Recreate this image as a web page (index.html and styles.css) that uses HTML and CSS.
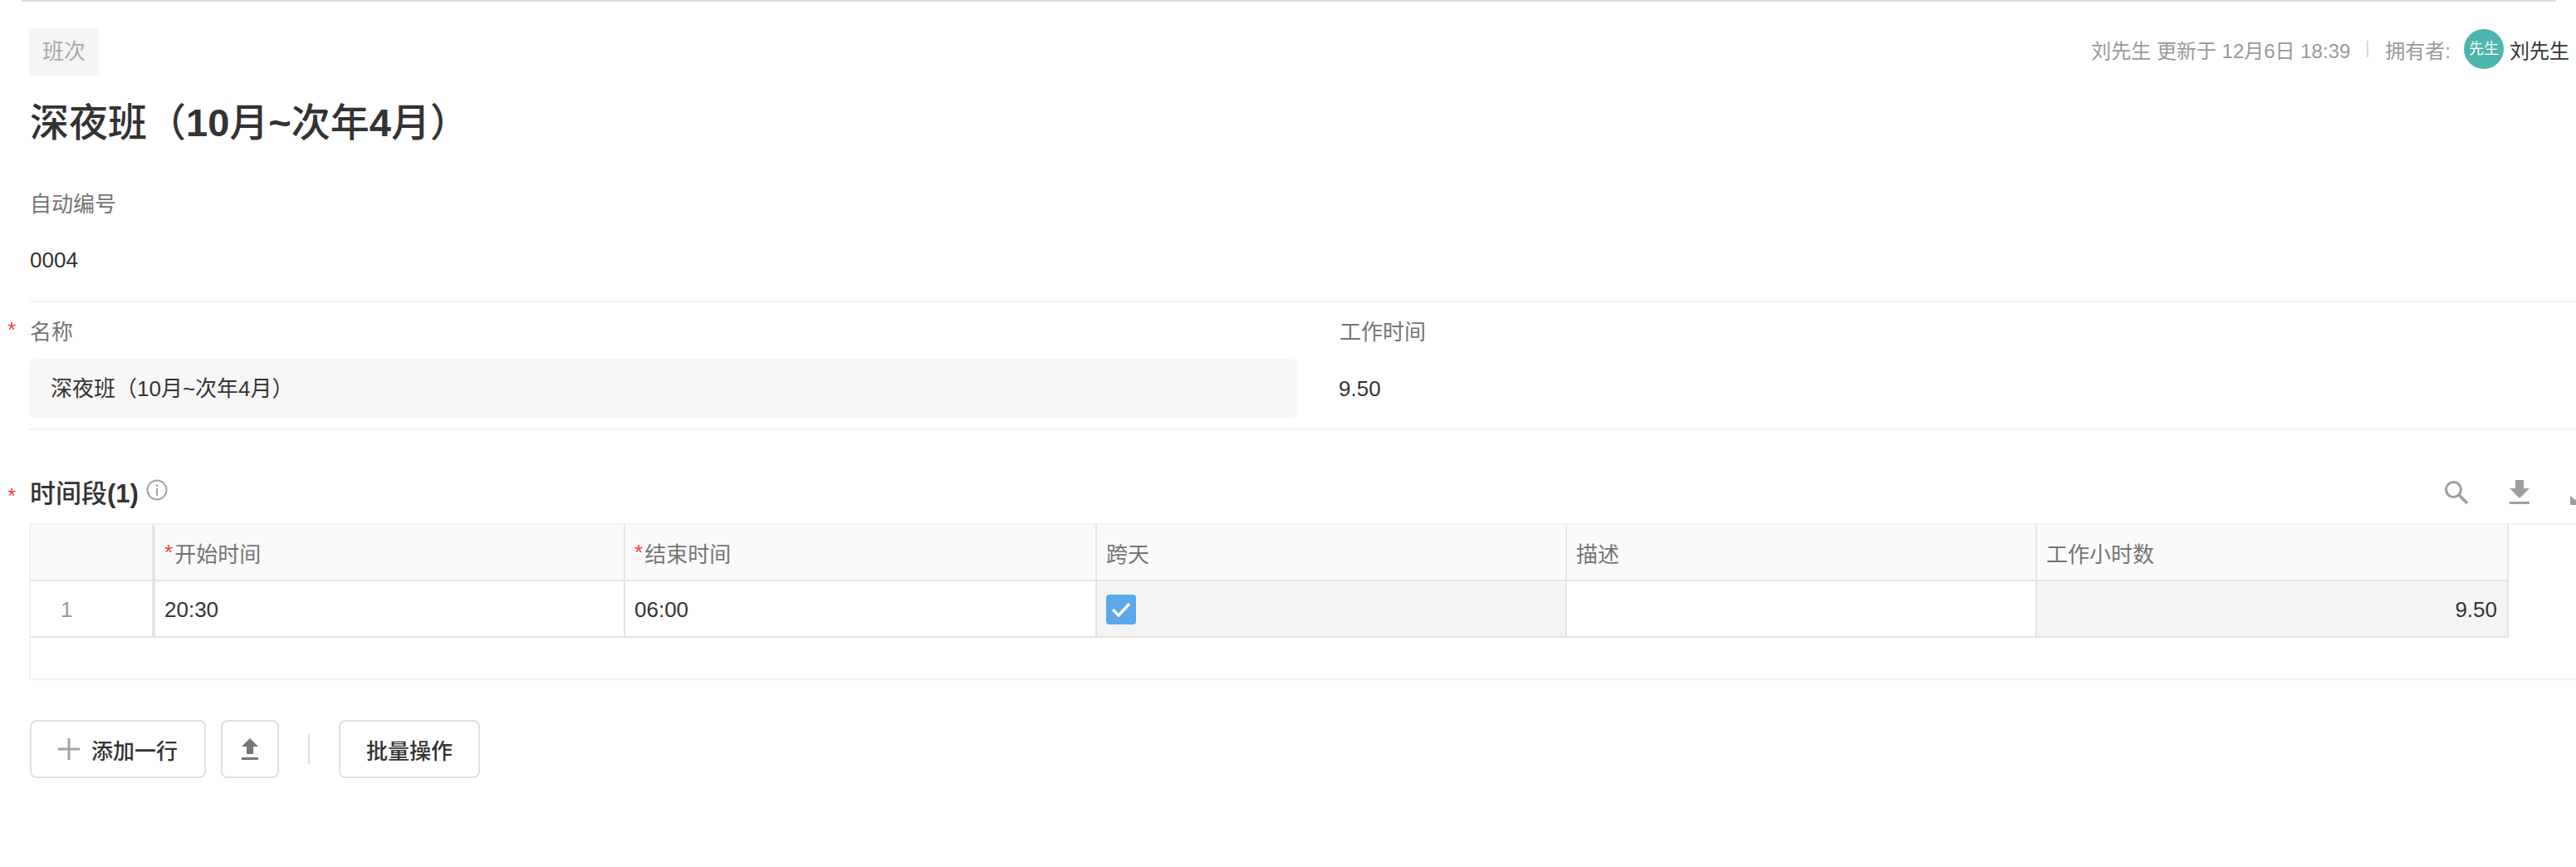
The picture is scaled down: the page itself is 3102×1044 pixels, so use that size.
FILE: index.html
```html
<!DOCTYPE html>
<html lang="zh-CN">
<head>
    <meta charset="UTF-8">
    <title>班次</title>
    <link rel="stylesheet" href="styles.css">
</head>
<body>
    <div class="top-line"></div>
    <div class="page">
        <div class="head">
            <span class="tag">班次</span>
            <div class="meta">
                <span>刘先生 更新于 12月6日 18:39</span>
                <i class="meta-sep"></i>
                <span>拥有者:</span>
                <span class="avatar">先生</span>
                <span class="owner">刘先生</span>
            </div>
        </div>
        <h1 class="title">深夜班（<span class="bold">10</span>月<span class="bold">~</span>次年<span class="bold">4</span>月）</h1>

        <div class="field-auto">
            <div class="label">自动编号</div>
            <div class="value">0004</div>
        </div>

        <div class="form-row">
            <div class="field">
                <div class="label required">名称</div>
                <div class="input">深夜班（10月~次年4月）</div>
            </div>
            <div class="field">
                <div class="label">工作时间</div>
                <div class="static">9.50</div>
            </div>
        </div>

        <div class="section-head">
            <h2 class="section-title required">时间段<span class="bold">(1)</span></h2>
            <svg class="info-icon" viewBox="0 0 26 26" width="26" height="26">
                <circle cx="13" cy="13" r="11.500" fill="none" stroke="#a3a3a3" stroke-width="2"/>
                <rect x="12" y="11" width="2" height="9" fill="#a3a3a3"/>
                <rect x="12" y="6.500" width="2" height="2.500" fill="#a3a3a3"/>
            </svg>
            <div class="tools">
                <svg viewBox="0 0 30 30" width="30" height="30">
                    <circle cx="11.500" cy="11.500" r="9" fill="none" stroke="#9e9e9e" stroke-width="3"/>
                    <path d="M18 18 L28 28" stroke="#9e9e9e" stroke-width="3.500" fill="none"/>
                </svg>
                <svg viewBox="0 0 24 30" width="24" height="30">
                    <path d="M7 0 H17 V10 H24 L12 22 L0 10 H7 Z" fill="#9e9e9e"/>
                    <rect x="0" y="26" width="24" height="3" fill="#9e9e9e"/>
                </svg>
                <svg class="tool-cut" viewBox="0 0 24 30" width="24" height="30">
                    <path d="M0 19 L6 24 L12 19 V30 H0 Z" fill="#9e9e9e"/>
                </svg>
            </div>
        </div>

        <div class="table-wrap">
            <div class="grid">
                <div class="th idx"></div>
                <div class="th"><b>*</b>开始时间</div>
                <div class="th"><b>*</b>结束时间</div>
                <div class="th">跨天</div>
                <div class="th">描述</div>
                <div class="th">工作小时数</div>

                <div class="td idx">1</div>
                <div class="td">20:30</div>
                <div class="td">06:00</div>
                <div class="td off">
                    <span class="checkbox">
                        <svg viewBox="0 0 36 36" width="36" height="36">
                            <path d="M8 18 L15 25 L28 11" fill="none" stroke="#fff" stroke-width="3.500"/>
                        </svg>
                    </span>
                </div>
                <div class="td"></div>
                <div class="td off num">9.50</div>
            </div>
        </div>

        <div class="actions">
            <button class="btn btn-add">
                <svg viewBox="0 0 26 26" width="26" height="26">
                    <path d="M13 0 V26 M0 13 H26" stroke="#a3a3a3" stroke-width="3" fill="none"/>
                </svg>
                添加一行
            </button>
            <button class="btn btn-icon">
                <svg viewBox="0 0 20 26" width="20" height="26">
                    <path d="M10 0 L20 10 H14 V19 H6 V10 H0 Z" fill="#757575"/>
                    <rect x="0" y="23" width="20" height="3" fill="#757575"/>
                </svg>
            </button>
            <i class="action-sep"></i>
            <button class="btn btn-batch">批量操作</button>
        </div>
    </div>
</body>
</html>
```

FILE: styles.css
```css
html, body {
    margin: 0;
    background: #fff;
    overflow: hidden;
}
body {
    font-family: "Liberation Sans", "Noto Sans CJK SC", sans-serif;
    font-size: 26px;
    color: #333;
}
.bold {
    font-weight: bold;
}
.top-line {
    height: 2px;
    margin: 0 24px 0 26px;
    background: #ddd;
}
.page {
    padding: 32px 0 0 36px;
}
.head {
    display: flex;
    justify-content: space-between;
    align-items: flex-start;
}
.tag {
    width: 84px;
    height: 57px;
    line-height: 57px;
    margin-left: -1px;
    text-align: center;
    background: #f5f5f5;
    border-radius: 6px;
    color: #aaa;
}
.meta {
    display: flex;
    align-items: center;
    height: 48px;
    margin: 1px 8px 0 0;
    font-size: 24px;
    color: #999;
}
.meta-sep {
    width: 2px;
    height: 20px;
    margin: 0 20px;
    background: #d8d8d8;
}
.avatar {
    width: 48px;
    height: 48px;
    line-height: 48px;
    margin: 0 7px 0 16px;
    border-radius: 50%;
    background: #4db6ac;
    color: #fff;
    font-size: 18px;
    text-align: center;
}
.owner {
    color: #333;
}
.title {
    margin: 27px 0 0;
    font-size: 47px;
    line-height: 60px;
    font-weight: 500;
}
.label {
    color: #757575;
    line-height: 36px;
}
.required {
    position: relative;
}
.required::before {
    content: "*";
    position: absolute;
    left: -27px;
    top: 0;
    color: #f44336;
    font-size: 26px;
    line-height: 30px;
}
.field-auto {
    margin-top: 50px;
    padding-bottom: 31px;
    border-bottom: 2px solid #f2f2f2;
}
.field-auto .value {
    margin-top: 31px;
    line-height: 36px;
}
.form-row {
    display: grid;
    grid-template-columns: 1527px 1fr;
    column-gap: 50px;
    margin-left: -1px;
    padding: 18px 0 12px;
    border-bottom: 2px solid #f2f2f2;
}
.form-row .label {
    margin-left: 1px;
}
.input {
    height: 72px;
    line-height: 72px;
    margin-top: 14px;
    padding-left: 26px;
    background: #f7f7f7;
    border-radius: 8px;
}
.static {
    height: 72px;
    line-height: 72px;
    margin-top: 14px;
}
.section-head {
    display: flex;
    align-items: flex-start;
    height: 112px;
}
.section-title {
    margin: 59px 0 0;
    font-size: 31px;
    line-height: 36px;
    font-weight: 500;
}
.section-title::before {
    top: 5px;
    font-weight: normal;
}
.info-icon {
    margin: 59px 0 0 9px;
}
.tools {
    display: flex;
    margin: 60px 0 0 auto;
    gap: 49px;
}
.tool-cut {
    margin-right: -17px;
}
.table-wrap {
    margin-left: -1px;
    height: 185px;
    border-left: 2px solid #f2f2f2;
    border-top: 2px solid #f2f2f2;
    border-bottom: 2px solid #f2f2f2;
}
.grid {
    display: grid;
    width: 2984px;
    grid-template-columns: 150px 566px 568px 566px 566px 568px;
    grid-template-rows: 68px 68px;
}
.th, .td {
    display: flex;
    align-items: center;
    padding: 0 12px 0 11px;
    border-right: 2px solid #e5e5e5;
    border-bottom: 2px solid #e5e5e5;
    box-sizing: border-box;
}
.td {
    padding-top: 2px;
}
.th {
    background: #fafafa;
    color: #757575;
}
.th b {
    color: #f44336;
    font-weight: normal;
    margin-right: 2px;
}
.idx {
    border-right-width: 4px;
    padding-left: 36px;
    color: #999;
}
.off {
    background: #f4f4f4;
}
.num {
    justify-content: flex-end;
}
.checkbox {
    display: block;
    width: 36px;
    height: 36px;
    background: #5aa9ec;
    border-radius: 4px;
}
.checkbox svg {
    display: block;
}
.actions {
    display: flex;
    align-items: center;
    margin-top: 48px;
}
.btn {
    display: flex;
    align-items: center;
    justify-content: center;
    height: 70px;
    padding: 0;
    background: #fff;
    border: 2px solid #e0e0e0;
    border-radius: 8px;
    font-family: inherit;
    font-size: 26px;
    font-weight: 500;
    color: #333;
}
.btn-add {
    width: 212px;
    gap: 14px;
}
.btn-icon {
    width: 70px;
    margin-left: 18px;
}
.action-sep {
    width: 2px;
    height: 36px;
    margin: 0 35px;
    background: #ddd;
}
.btn-batch {
    width: 170px;
}
```
